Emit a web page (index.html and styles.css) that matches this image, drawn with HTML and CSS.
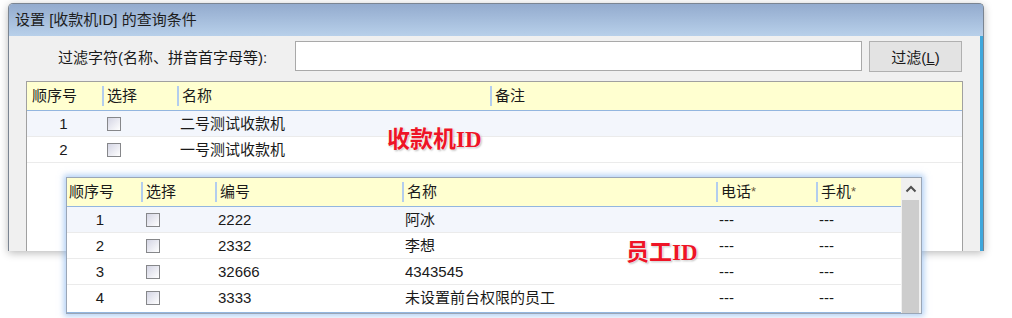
FILE: index.html
```html
<!DOCTYPE html>
<html lang="zh-CN">
<head>
    <meta charset="UTF-8">
    <title>设置查询条件</title>
    <link rel="stylesheet" href="styles.css">
</head>
<body>
    <div class="dialog">
        <div class="titlebar">设置 [收款机ID] 的查询条件</div>
        <div class="dialog-body">
            <div class="filter-row">
                <label class="filter-label" for="filterInput">过滤字符(名称、拼音首字母等):</label>
                <input class="filter-input" id="filterInput" type="text">
                <button class="btn">过滤(<u>L</u>)</button>
            </div>

            <div class="grid back-grid">
                <div class="grid-row grid-head">
                    <div class="head-cell first">顺序号</div>
                    <div class="head-cell">选择</div>
                    <div class="head-cell">名称</div>
                    <div class="head-cell">备注</div>
                </div>
                <div class="grid-row alt">
                    <div class="cell num">1</div>
                    <div class="cell"><span class="check"></span></div>
                    <div class="cell">二号测试收款机</div>
                    <div class="cell"></div>
                </div>
                <div class="grid-row">
                    <div class="cell num">2</div>
                    <div class="cell"><span class="check"></span></div>
                    <div class="cell">一号测试收款机</div>
                    <div class="cell"></div>
                </div>
            </div>
        </div>
    </div>

    <div class="popup">
        <div class="grid staff-grid">
            <div class="grid-row grid-head">
                <div class="head-cell first">顺序号</div>
                <div class="head-cell">选择</div>
                <div class="head-cell">编号</div>
                <div class="head-cell">名称</div>
                <div class="head-cell">电话<span class="star">*</span></div>
                <div class="head-cell">手机<span class="star">*</span></div>
            </div>
            <div class="grid-row alt">
                <div class="cell num">1</div>
                <div class="cell"><span class="check"></span></div>
                <div class="cell">2222</div>
                <div class="cell">阿冰</div>
                <div class="cell">---</div>
                <div class="cell">---</div>
            </div>
            <div class="grid-row">
                <div class="cell num">2</div>
                <div class="cell"><span class="check"></span></div>
                <div class="cell">2332</div>
                <div class="cell">李想</div>
                <div class="cell">---</div>
                <div class="cell">---</div>
            </div>
            <div class="grid-row">
                <div class="cell num">3</div>
                <div class="cell"><span class="check"></span></div>
                <div class="cell">32666</div>
                <div class="cell">4343545</div>
                <div class="cell">---</div>
                <div class="cell">---</div>
            </div>
            <div class="grid-row">
                <div class="cell num">4</div>
                <div class="cell"><span class="check"></span></div>
                <div class="cell">3333</div>
                <div class="cell">未设置前台权限的员工</div>
                <div class="cell">---</div>
                <div class="cell">---</div>
            </div>
        </div>
        <div class="scrollbar">
            <div class="scroll-up">
                <svg width="12" height="8" viewBox="0 0 12 8"><path d="M1.5 6.5 L6 2 L10.5 6.5" fill="none" stroke="#505050" stroke-width="2"/></svg>
            </div>
            <div class="scroll-thumb"></div>
        </div>
    </div>

    <div class="tag tag-pos">收款机<span class="tag-latin">ID</span></div>
    <div class="tag tag-staff">员工<span class="tag-latin">ID</span></div>
</body>
</html>
```

FILE: styles.css
```css
body {
    width: 1012px;
    height: 318px;
    margin: 0;
    overflow: hidden;
    position: relative;
    background: #ffffff;
    font-family: "Liberation Sans", "Noto Sans CJK SC", sans-serif;
    font-size: 15px;
    color: #1a1a1a;
}

.dialog {
    width: 974px;
    height: 247px;
    margin: 3px 0 0 8px;
    border: 1px solid #7b8592;
    border-bottom: none;
    border-radius: 5px 5px 0 0;
    background: #f0f0f0;
    box-shadow: 0 2px 8px rgba(0, 0, 0, 0.28), inset -3px 0 0 #3ea7dc;
    overflow: hidden;
}

.titlebar {
    height: 32px;
    line-height: 32px;
    padding-left: 6px;
    background: linear-gradient(#93abce, #b8d0ea);
    color: #1e1e1e;
    white-space: pre;
}

.dialog-body {
    padding: 0 20px 0 17px;
}

.filter-row {
    display: flex;
    align-items: center;
    height: 31px;
    padding-top: 5px;
    margin-left: 32px;
}

.filter-label {
    width: 210px;
    margin-right: 27px;
    white-space: nowrap;
}

.filter-input {
    width: 567px;
    height: 30px;
    box-sizing: border-box;
    margin: 0 7px 1px 0;
    border: 1px solid #a9a9a9;
    background: #ffffff;
}

.btn {
    width: 93px;
    height: 31px;
    box-sizing: border-box;
    padding: 0;
    border: 1px solid #b0b0b0;
    background: #e3e3e3;
    font-family: inherit;
    font-size: 15px;
    color: #1a1a1a;
}

.grid {
    background: #ffffff;
}

.back-grid {
    margin-top: 9px;
    height: 200px;
    border: 1px solid #a0a0a0;
    border-bottom: none;
}

.grid-row {
    display: grid;
    height: 25px;
    border-bottom: 1px solid #ebebeb;
    align-items: center;
}

.back-grid .grid-row {
    grid-template-columns: 75px 75px 313px 1fr;
}

.staff-grid .grid-row {
    grid-template-columns: 74px 74px 187px 314px 100px 84px;
}

.grid-row.grid-head {
    height: 28px;
    background: #ffffd0;
    border-bottom: 1px solid #93b6df;
}

.grid-row.alt {
    background: #f3f6fc;
}

.head-cell {
    height: 20px;
    line-height: 20px;
    padding-left: 3px;
    border-left: 2px solid #b3cdee;
    white-space: nowrap;
}

.head-cell.first {
    border-left: none;
    padding-left: 5px;
}

.staff-grid .head-cell.first {
    padding-left: 2px;
}

.star {
    color: #6a5a3c;
    font-size: 13px;
    vertical-align: top;
}

.cell {
    padding-left: 3px;
    white-space: nowrap;
    line-height: 25px;
}

.cell.num {
    padding: 0 2px 0 0;
    text-align: center;
}

.staff-grid .cell.num {
    padding-right: 8px;
}

.check {
    display: block;
    width: 12px;
    height: 12px;
    margin-left: 2px;
    border: 1px solid #86878a;
    background: linear-gradient(135deg, #d4d5e4, #ffffff);
}

.popup {
    position: absolute;
    left: 66px;
    top: 177px;
    width: 854px;
    height: 135px;
    display: flex;
    border: 1px solid #9aa6b6;
    background: #ffffff;
    box-shadow: 0 0 6px 2px rgba(110, 165, 235, 0.55);
}

.staff-grid {
    flex: 1;
    border-bottom: 1px solid #93b6df;
}

.staff-grid .grid-row:last-child {
    border-bottom: none;
}

.scrollbar {
    width: 20px;
    display: flex;
    flex-direction: column;
    background: #f0f0f0;
}

.scroll-up {
    height: 22px;
    display: flex;
    align-items: center;
    justify-content: center;
}

.scroll-thumb {
    flex: 1;
    margin: 0 2px 0 1px;
    background: #cdcdcd;
}

.tag {
    position: absolute;
    font-size: 23px;
    font-weight: 700;
    line-height: 24px;
    color: #ee1426;
    text-shadow: 0 0 2px #ffffff, 0 0 2px #ffffff, 1px 1px 2px rgba(0, 0, 0, 0.35);
    white-space: nowrap;
}

.tag-latin {
    font-family: "Liberation Serif", serif;
}

.tag-pos {
    left: 387px;
    top: 127px;
}

.tag-staff {
    left: 626px;
    top: 240px;
}
```
